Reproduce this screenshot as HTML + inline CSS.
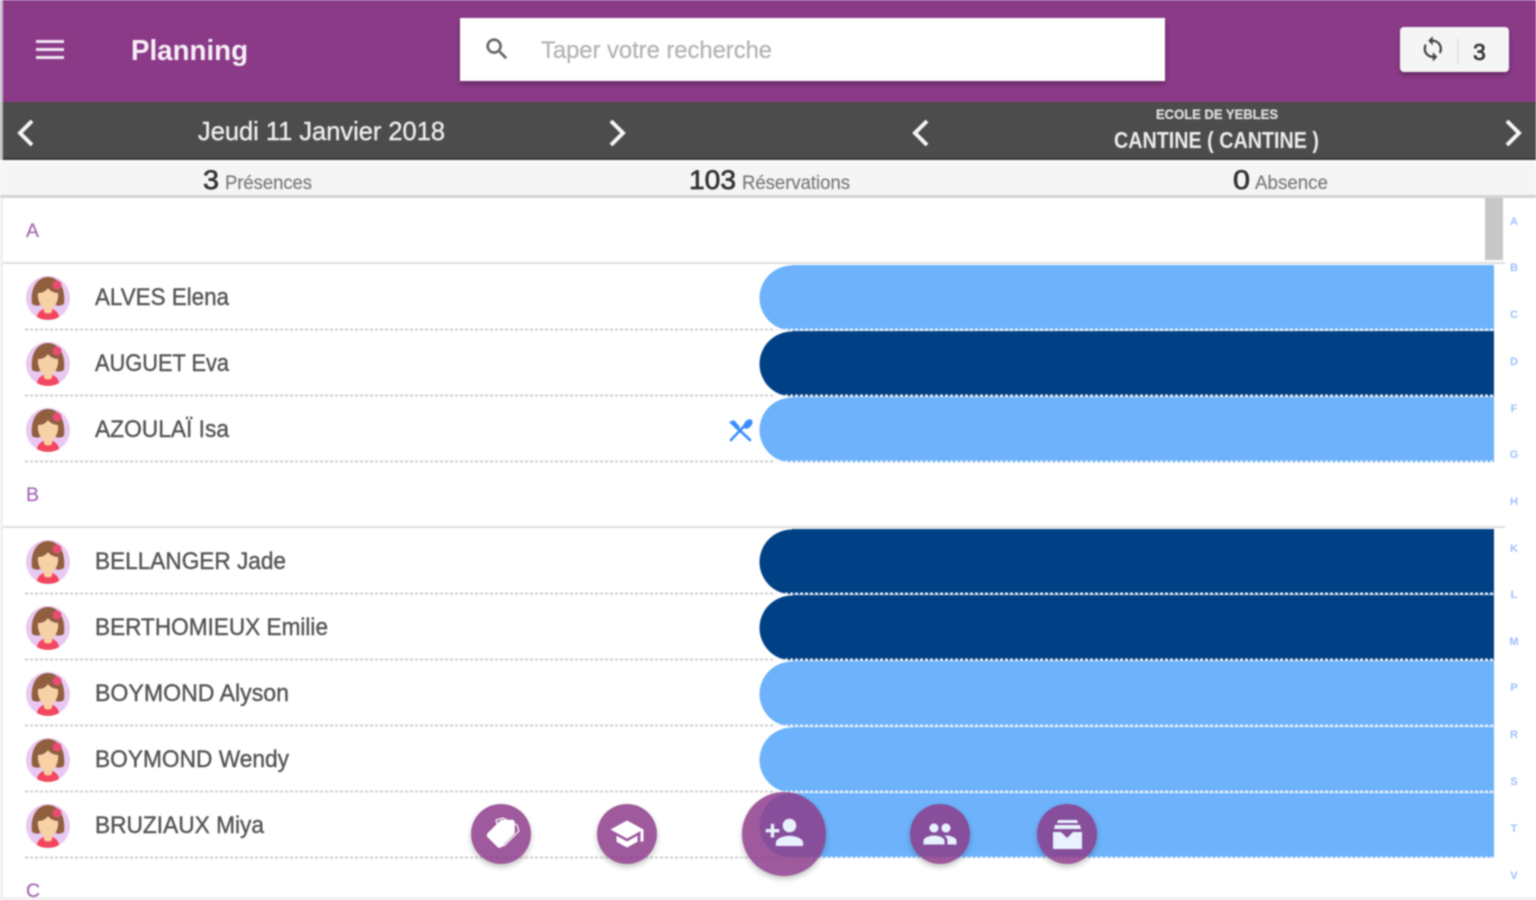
<!DOCTYPE html>
<html lang="fr">
<head>
<meta charset="utf-8">
<title>Planning</title>
<style>
html,body{margin:0;padding:0;width:1536px;height:900px;overflow:hidden;background:#fff}
svg{display:block;position:absolute;left:0;top:0;filter:blur(.85px)}
text{font-family:"Liberation Sans",sans-serif}
.name{font-size:24px;fill:#555;stroke:#555;stroke-width:.4px}
.sec{font-size:19px;fill:#a664b4;stroke:#a664b4;stroke-width:.2px}
.idx{font-size:11px;fill:#9cc0fa;text-anchor:middle;font-weight:bold}
.num{font-size:27px;fill:#333;stroke:#333;stroke-width:.7px}
.lab{font-size:19px;fill:#7d7d7d;stroke:#7d7d7d;stroke-width:.25px}
.chev{fill:none;stroke:#f4f4f4;stroke-width:4;stroke-linejoin:miter}
.dash{stroke:#cfcfcf;stroke-width:2;stroke-dasharray:3 2}
.dashw{stroke:#eef1f6;stroke-width:2;stroke-dasharray:3 2}
</style>
</head>
<body>
<svg width="1536" height="900" viewBox="0 0 1536 900" xmlns="http://www.w3.org/2000/svg">
<defs>
<filter id="sh" x="-30%" y="-30%" width="160%" height="170%"><feDropShadow dx="0" dy="3" stdDeviation="3" flood-color="#000" flood-opacity=".28"/></filter>
<clipPath id="avc"><circle cx="22" cy="22" r="22"/></clipPath>
<g id="av">
<circle cx="22" cy="22" r="22" fill="#e9c8f3"/>
<g clip-path="url(#avc)">
<path d="M11 44c-1-6 3-10 7-11h8c4 1 8 5 7 11z" fill="#f2475f"/>
<path d="M6 28C4 8 14 1 22 1s18 7 16 27c-3 2-6 2-8 1H14c-2 1-5 1-8-1z" fill="#8f5f40"/>
<path d="M12 17c5 0 8-2 10-5 2 3 6 5 10 5 1 8-4 17-10 17S11 25 12 17z" fill="#f8d0a6"/>
<path d="M18 33h8v3c-2 2-6 2-8 0z" fill="#f8d0a6"/>
<circle cx="31" cy="9" r="4.5" fill="#e94c72"/>
</g>
</g>
</defs>

<!-- header -->
<rect x="0" y="0" width="1536" height="102" fill="#8b3a88"/>
<rect x="0" y="0" width="3" height="160" fill="#c9bcc9"/>
<g fill="#f1e3f0">
<rect x="36" y="40" width="28" height="3"/>
<rect x="36" y="48" width="28" height="3"/>
<rect x="36" y="56" width="28" height="3"/>
</g>
<text x="131" y="60" font-size="29" font-weight="bold" fill="#f6eef6" textLength="117" lengthAdjust="spacingAndGlyphs">Planning</text>
<rect x="460" y="18" width="705" height="63" fill="#fff" filter="url(#sh)"/>
<path transform="translate(483,35) scale(1.17)" fill="#666" stroke="#666" stroke-width=".3" d="M15.5 14h-.79l-.28-.27C15.41 12.59 16 11.11 16 9.5 16 5.91 13.09 3 9.5 3S3 5.91 3 9.5 5.91 16 9.5 16c1.61 0 3.09-.59 4.23-1.57l.27.28v.79l5 4.99L20.49 19l-4.99-5zm-6 0C7.01 14 5 11.99 5 9.5S7.01 5 9.5 5 14 7.01 14 9.5 11.99 14 9.5 14z"/>
<text x="541" y="58" font-size="24" fill="#b4b4b4" stroke="#b4b4b4" stroke-width=".3" textLength="231" lengthAdjust="spacingAndGlyphs">Taper votre recherche</text>
<rect x="1400" y="27" width="109" height="45" rx="4" fill="#f5f5f5" filter="url(#sh)"/>
<path transform="translate(1419,35) scale(1.15)" fill="#444" d="M12 4V1L8 5l4 4V6c3.31 0 6 2.69 6 6 0 1.01-.25 1.97-.7 2.8l1.46 1.46C19.54 15.03 20 13.57 20 12c0-4.42-3.58-8-8-8zm0 14c-3.31 0-6-2.69-6-6 0-1.01.25-1.97.7-2.8L5.24 7.74C4.46 8.97 4 10.43 4 12c0 4.42 3.58 8 8 8v3l4-4-4-4v3z"/>
<rect x="1457" y="39" width="2" height="25" fill="#e2e2e2"/>
<text x="1473" y="60" font-size="23" fill="#333" stroke="#333" stroke-width=".7">3</text>

<!-- navigation bar -->
<rect x="0" y="102" width="1536" height="58" fill="#4b4c4b"/>
<rect x="0" y="158" width="1536" height="2" fill="#3a3a3a"/>
<rect x="0" y="102" width="3" height="58" fill="#bbb"/>
<path class="chev" d="M32 121L20 133L32 145"/>
<path class="chev" d="M611 121L623 133L611 145"/>
<path class="chev" d="M927 121L915 133L927 145"/>
<path class="chev" d="M1507 121L1519 133L1507 145"/>
<text x="198" y="140" font-size="26" fill="#ececec" stroke="#ececec" stroke-width=".4" textLength="247" lengthAdjust="spacingAndGlyphs">Jeudi 11 Janvier 2018</text>
<text x="1156" y="119" font-size="14" font-weight="bold" fill="#dcdcdc" stroke="#dcdcdc" stroke-width=".3" textLength="122" lengthAdjust="spacingAndGlyphs">ECOLE DE YEBLES</text>
<text x="1114" y="148" font-size="23" font-weight="bold" fill="#ececec" textLength="205" lengthAdjust="spacingAndGlyphs">CANTINE ( CANTINE )</text>

<!-- stats -->
<rect x="0" y="160" width="1536" height="36" fill="#f5f5f5"/>
<rect x="0" y="160" width="1536" height="3" fill="#fafafa"/>
<rect x="0" y="195" width="1536" height="3" fill="#d4d4d4"/>
<text class="num" x="203" y="189" textLength="16" lengthAdjust="spacingAndGlyphs">3</text>
<text class="lab" x="225" y="189" textLength="87" lengthAdjust="spacingAndGlyphs">Présences</text>
<text class="num" x="689" y="189" textLength="47" lengthAdjust="spacingAndGlyphs">103</text>
<text class="lab" x="742" y="189" textLength="108" lengthAdjust="spacingAndGlyphs">Réservations</text>
<text class="num" x="1233" y="189" textLength="17" lengthAdjust="spacingAndGlyphs">0</text>
<text class="lab" x="1255" y="189" textLength="73" lengthAdjust="spacingAndGlyphs">Absence</text>

<!-- list left edge -->
<rect x="0" y="198" width="3" height="702" fill="#efefef"/>

<!-- bars -->
<g fill="#6db2fb">
<path d="M792 265H1494V330.5H792a32.5 32.5 0 0 1 0-65z"/>
<path d="M792 397H1494V462.5H792a32.5 32.5 0 0 1 0-65z"/>
<path d="M792 661H1494V726.5H792a32.5 32.5 0 0 1 0-65z"/>
<path d="M792 727H1494V792.5H792a32.5 32.5 0 0 1 0-65z"/>
<path d="M792 793H1494V858H792a32.5 32.5 0 0 1 0-65z"/>
</g>
<g fill="#004084">
<path d="M792 331H1494V396.5H792a32.5 32.5 0 0 1 0-65z"/>
<path d="M792 529H1494V594.5H792a32.5 32.5 0 0 1 0-65z"/>
<path d="M792 595H1494V660.5H792a32.5 32.5 0 0 1 0-65z"/>
</g>

<!-- section lines -->
<rect x="3" y="262" width="1502" height="2" fill="#dedede"/>
<rect x="3" y="526" width="1502" height="2" fill="#dedede"/>
<rect x="3" y="897" width="1533" height="3" fill="#f0f0f0"/>

<!-- row separators -->
<g>
<line class="dash" x1="25" x2="775" y1="329.5" y2="329.5"/>
<line class="dash" x1="25" x2="775" y1="395.5" y2="395.5"/>
<line class="dash" x1="25" x2="775" y1="461.5" y2="461.5"/>
<line class="dash" x1="25" x2="775" y1="593.5" y2="593.5"/>
<line class="dash" x1="25" x2="775" y1="659.5" y2="659.5"/>
<line class="dash" x1="25" x2="775" y1="725.5" y2="725.5"/>
<line class="dash" x1="25" x2="775" y1="791.5" y2="791.5"/>
<line class="dash" x1="25" x2="775" y1="857.5" y2="857.5"/>
<line class="dashw" x1="775" x2="1494" y1="329.5" y2="329.5"/>
<line class="dashw" x1="775" x2="1494" y1="395.5" y2="395.5"/>
<line class="dashw" x1="775" x2="1494" y1="461.5" y2="461.5"/>
<line class="dashw" x1="775" x2="1494" y1="593.5" y2="593.5"/>
<line class="dashw" x1="775" x2="1494" y1="659.5" y2="659.5"/>
<line class="dashw" x1="775" x2="1494" y1="725.5" y2="725.5"/>
<line class="dashw" x1="775" x2="1494" y1="791.5" y2="791.5"/>
<line class="dashw" x1="775" x2="1494" y1="857.5" y2="857.5"/>
</g>

<!-- section labels -->
<text class="sec" x="26" y="237" textLength="13" lengthAdjust="spacingAndGlyphs">A</text>
<text class="sec" x="26" y="501" textLength="13" lengthAdjust="spacingAndGlyphs">B</text>
<text class="sec" x="26" y="897" textLength="14" lengthAdjust="spacingAndGlyphs">C</text>

<!-- avatars -->
<use href="#av" x="26" y="276"/>
<use href="#av" x="26" y="342"/>
<use href="#av" x="26" y="408"/>
<use href="#av" x="26" y="540"/>
<use href="#av" x="26" y="606"/>
<use href="#av" x="26" y="672"/>
<use href="#av" x="26" y="738"/>
<use href="#av" x="26" y="804"/>

<!-- names -->
<text class="name" x="95" y="305" textLength="134" lengthAdjust="spacingAndGlyphs">ALVES Elena</text>
<text class="name" x="95" y="371" textLength="134" lengthAdjust="spacingAndGlyphs">AUGUET Eva</text>
<text class="name" x="95" y="437" textLength="134" lengthAdjust="spacingAndGlyphs">AZOULAÏ Isa</text>
<text class="name" x="95" y="569" textLength="191" lengthAdjust="spacingAndGlyphs">BELLANGER Jade</text>
<text class="name" x="95" y="635" textLength="233" lengthAdjust="spacingAndGlyphs">BERTHOMIEUX Emilie</text>
<text class="name" x="95" y="701" textLength="194" lengthAdjust="spacingAndGlyphs">BOYMOND Alyson</text>
<text class="name" x="95" y="767" textLength="194" lengthAdjust="spacingAndGlyphs">BOYMOND Wendy</text>
<text class="name" x="95" y="833" textLength="169" lengthAdjust="spacingAndGlyphs">BRUZIAUX Miya</text>

<!-- meal icon -->
<g stroke="#3b8dfb" stroke-width="2.6" stroke-linecap="round" fill="none">
<path d="M732 423L750 440"/>
<path d="M748 422L731 440"/>
</g>
<path d="M729 422l5-2 6 7-3 3z" fill="#3b8dfb"/>
<ellipse cx="748" cy="424" rx="3.6" ry="5.5" transform="rotate(42 748 424)" fill="#3b8dfb"/>

<!-- scrollbar -->
<rect x="1485" y="198" width="18" height="62" fill="#c8c8c8"/>

<!-- index -->
<text class="idx" x="1514" y="225">A</text>
<text class="idx" x="1514" y="271">B</text>
<text class="idx" x="1514" y="318">C</text>
<text class="idx" x="1514" y="365">D</text>
<text class="idx" x="1514" y="412">F</text>
<text class="idx" x="1514" y="458">G</text>
<text class="idx" x="1514" y="505">H</text>
<text class="idx" x="1514" y="552">K</text>
<text class="idx" x="1514" y="598">L</text>
<text class="idx" x="1514" y="645">M</text>
<text class="idx" x="1514" y="691">P</text>
<text class="idx" x="1514" y="738">R</text>
<text class="idx" x="1514" y="785">S</text>
<text class="idx" x="1514" y="832">T</text>
<text class="idx" x="1514" y="879">V</text>

<!-- floating buttons -->
<g opacity=".84">
<circle cx="501" cy="834" r="30" fill="#8c3a89" filter="url(#sh)"/>
<path d="M494 821l7-2 14 7 2 6-14 14-2 1z" fill="none" stroke="#fff" stroke-width="1.2" transform="translate(2,-1)"/>
<path transform="translate(484,817) scale(1.4) rotate(90 12 12)" fill="#fff" d="M21.41 11.58l-9-9C12.05 2.22 11.55 2 11 2H4c-1.1 0-2 .9-2 2v7c0 .55.22 1.05.59 1.42l9 9c.36.36.86.58 1.41.58.55 0 1.05-.22 1.41-.59l7-7c.37-.36.59-.86.59-1.41 0-.55-.23-1.06-.59-1.42z"/>
</g>
<g opacity=".84">
<circle cx="627" cy="834" r="30" fill="#8c3a89" filter="url(#sh)"/>
<path transform="translate(609,816) scale(1.5)" fill="#fff" d="M5 13.18v4L12 21l7-3.82v-4L12 17l-7-3.82zM12 3L1 9l11 6 9-4.91V17h2V9L12 3z"/>
</g>
<g opacity=".84">
<circle cx="784" cy="834" r="42" fill="#8c3a89" filter="url(#sh)"/>
<path transform="translate(764,812) scale(1.7)" fill="#fff" d="M15 12c2.21 0 4-1.79 4-4s-1.79-4-4-4-4 1.79-4 4 1.79 4 4 4zm-9-2V7H4v3H1v2h3v3h2v-3h3v-2H6zm9 4c-2.67 0-8 1.34-8 4v2h16v-2c0-2.66-5.33-4-8-4z"/>
</g>
<g opacity=".84">
<circle cx="940" cy="834" r="30" fill="#8c3a89" filter="url(#sh)"/>
<path transform="translate(922,816) scale(1.5)" fill="#fff" d="M16 11c1.66 0 2.99-1.34 2.99-3S17.66 5 16 5c-1.66 0-3 1.34-3 3s1.34 3 3 3zm-8 0c1.66 0 2.99-1.34 2.99-3S9.66 5 8 5C6.34 5 5 6.34 5 8s1.34 3 3 3zm0 2c-2.33 0-7 1.17-7 3.5V19h14v-2.5c0-2.33-4.67-3.5-7-3.5zm8 0c-.29 0-.62.02-.97.05 1.16.84 1.97 1.97 1.97 3.45V19h6v-2.5c0-2.33-4.67-3.5-7-3.5z"/>
</g>
<g opacity=".84">
<circle cx="1067" cy="834" r="30" fill="#8c3a89" filter="url(#sh)"/>
<path fill="#fff" d="M1058 820h19l1 3h-21zM1055 825h25l1 4h-27zM1053 832h8l6 6 6-6h9v17h-29z"/>
</g>
</svg>
</body>
</html>
